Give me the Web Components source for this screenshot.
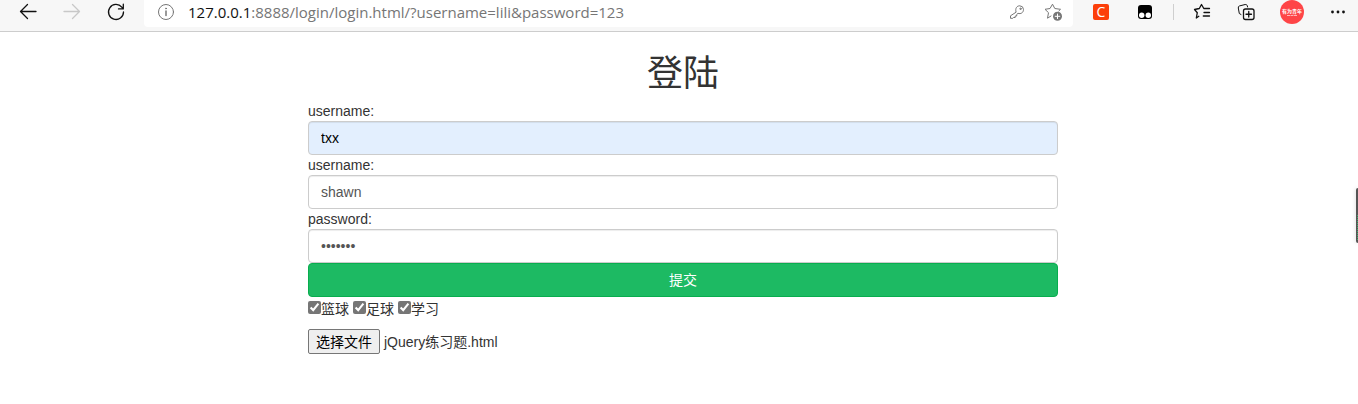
<!DOCTYPE html>
<html lang="zh-CN">
<head>
  <meta charset="UTF-8">
  <meta name="viewport" content="width=device-width, initial-scale=1">
  <title>登陆</title>
  <style>
    body {
      margin: 0;
      background: #fff;
      color: #333;
      font-family: "Liberation Sans", "Noto Sans CJK SC", sans-serif;
      font-size: 14px;
      line-height: 20px;
    }
  </style>
</head>
<body>
  <browser-toolbar></browser-toolbar>
  <login-page>
    <form-field label="username:" name="username" type="text" value="txx" filled></form-field>
    <form-field label="username:" name="nickname" type="text" value="shawn"></form-field>
    <form-field label="password:" name="password" type="password" value="1234567"></form-field>
    <submit-button>提交</submit-button>
    <hobby-list></hobby-list>
    <file-picker filename="jQuery练习题.html">选择文件</file-picker>
  </login-page>
  <side-handle></side-handle>

  <script>
    class BrowserToolbar extends HTMLElement {
      constructor () {
        super()
        this.shadow = this.attachShadow({ mode: 'open' })
      }

      connectedCallback () {
        this.render()
      }

      render () {
        this.shadow.innerHTML =
        /*html*/`
          <style>
            :host {
              display: flex;
              box-sizing: border-box;
              height: 32px;
              padding: 0 8px 0 16px;
              gap: 16px;
              background: #f7f7f7;
              border-bottom: 1px solid #cdcdcd;
            }

            button {
              flex: none;
              width: 24px;
              height: 24px;
              padding: 0;
              border: 0;
              background: none;
              color: #111;
            }

            button:disabled {
              color: #c8c8c8;
            }

            svg {
              display: block;
              width: 24px;
              height: 24px;
              fill: none;
              stroke: currentColor;
              stroke-linecap: round;
              stroke-linejoin: round;
            }

            .group {
              display: flex;
              gap: 20px;
            }

            .last {
              gap: 22px;
              padding-left: 6px;
            }

            .address {
              display: flex;
              flex: 1;
              min-width: 0;
              height: 27px;
              box-sizing: border-box;
              padding: 0 8px 0 10px;
              background: #fff;
              border-radius: 0 0 4px 4px;
            }

            .address button {
              color: #767676;
            }

            .url {
              flex: 1;
              min-width: 0;
              margin: 0 10px;
              overflow: hidden;
              white-space: nowrap;
              outline: 0;
              font: 15px/25px "Open Sans", "Noto Sans", sans-serif;
              color: #767676;
            }

            .host {
              color: #111;
            }

            .tools {
              display: flex;
              gap: 12px;
            }

            .badge {
              display: block;
              width: 16px;
              height: 16px;
              margin: 0 auto;
              border-radius: 2px;
              background: #fc3f0a;
              color: #fff;
              font: 14px/16px "Open Sans", sans-serif;
              text-align: center;
            }

            .divider {
              width: 1px;
              height: 16px;
              margin-top: 4px;
              background: #cfcfcf;
            }

            .avatar {
              border-radius: 50%;
              background: #fe4547;
              color: #fff;
              font: bold 5px/6px "Noto Sans CJK SC", sans-serif;
            }

            .avatar::after {
              content: "";
              display: block;
              width: 10px;
              margin: 1px auto 0;
              border-top: 1px dashed #ffb5b6;
            }
          </style>

          <div class="group">
            <button aria-label="后退">
              <svg viewBox="0 0 24 24"><path d="M20 11.5H4.5M11.500 4.500L4.500 11.500L11.500 18.500" stroke-width="1.3"/></svg>
            </button>
            <button aria-label="前进" disabled>
              <svg viewBox="0 0 24 24"><path d="M4 11.500H19.500M12.500 4.500L19.500 11.500L12.500 18.500" stroke-width="1.3"/></svg>
            </button>
            <button aria-label="刷新">
              <svg viewBox="0 0 24 24"><path d="M19.500 12A7.500 7.500 0 1 1 17.800 7.200L19 8.700M19.300 4.200V8.900H14.500" stroke-width="1.3"/></svg>
            </button>
          </div>

          <div class="address">
            <button aria-label="网站信息">
              <svg viewBox="0 0 24 24"><circle cx="12" cy="12" r="7.500"/><path d="M12 11V15.500" stroke-width="1.5"/><circle cx="12" cy="8.500" r=".5"/></svg>
            </button>
            <div class="url" role="textbox" aria-label="地址" contenteditable="true" spellcheck="false"><span class="host">127.0.0.1</span>:8888/login/login.html/?username=lili&amp;password=123</div>
            <div class="tools">
              <button aria-label="密码">
                <svg viewBox="0 0 24 24"><path d="M11 11.800C10 8.500 11.700 5.800 14.800 5.800A3.900 3.900 0 0 1 18.500 9.500C18.500 12.700 15.700 14.300 13 13.300L11.700 14.500V16H10.200V17.500H8.500L7.800 18.300H5.500V16.200Z"/><circle cx="15.500" cy="8.800" r=".7"/></svg>
              </button>
              <button aria-label="添加到收藏夹">
                <svg viewBox="0 0 24 24"><path d="M10 16L6.500 18.200L7.500 12.700L4 9.300L9 8.500L11.500 4.200L13.800 8.500L19.500 9.300L17.800 11"/><circle cx="16.500" cy="16.300" r="4.500" fill="currentColor" stroke="none"/><path d="M14.200 16.300H18.800M16.500 14V18.600" stroke="#fff"/></svg>
              </button>
            </div>
          </div>

          <div class="group">
            <button aria-label="扩展 C"><span class="badge">C</span></button>
            <button aria-label="Tampermonkey">
              <svg viewBox="0 0 24 24"><rect x="5" y="5" width="14" height="14" rx="3" fill="#000" stroke="none"/><circle cx="8.700" cy="15.300" r="2.700" fill="#fff" stroke="none"/><circle cx="15.300" cy="15.300" r="2.700" fill="#fff" stroke="none"/></svg>
            </button>
          </div>
          <div class="divider"></div>
          <div class="group">
            <button aria-label="收藏夹">
              <svg viewBox="0 0 24 24"><path d="M8.800 16.300L6.300 18L7.300 12.700L4.500 9.500L9.300 8.500L11.500 4.500L13.800 8.500H19.500M14 12.500H19.500M13.300 16H19.500" stroke-width="1.3"/></svg>
            </button>
            <button aria-label="集锦">
              <svg viewBox="0 0 24 24"><path d="M7 14.500L5.300 13.500L4.300 8Q4 6.300 5.600 5.900L11.200 4.500Q12.800 4.200 13.300 5.800L13.600 7"/><rect x="9.500" y="9" width="10.500" height="10.500" rx="2" stroke-width="1.3"/><path d="M14.750 11.500V17M12 14.250H17.500" stroke-width="1.300"/></svg>
            </button>
          </div>
          <div class="group last">
            <button class="avatar" aria-label="个人资料">有为青年</button>
            <button aria-label="设置及其他">
              <svg viewBox="0 0 24 24"><g fill="currentColor" stroke="none"><circle cx="6.500" cy="12" r="1.400"/><circle cx="12" cy="12" r="1.400"/><circle cx="17.500" cy="12" r="1.400"/></g></svg>
            </button>
          </div>
        `
      }
    }
    customElements.define('browser-toolbar', BrowserToolbar)

    class LoginPage extends HTMLElement {
      constructor () {
        super()
        this.shadow = this.attachShadow({ mode: 'open' })
      }

      connectedCallback () {
        this.render()
      }

      render () {
        this.shadow.innerHTML =
        /*html*/`
          <style>
            :host {
              display: block;
              padding: 20px 0 20px 8px;
            }

            h1 {
              margin: 0 0 5px;
              font-size: 36px;
              line-height: 44px;
              font-weight: 400;
              text-align: center;
            }

            form {
              max-width: 750px;
              margin: 0 auto;
            }
          </style>

          <form>
            <h1>登陆</h1>
            <slot></slot>
          </form>
        `
      }
    }
    customElements.define('login-page', LoginPage)

    class FormField extends HTMLElement {
      constructor () {
        super()
        this.shadow = this.attachShadow({ mode: 'open' })
      }

      connectedCallback () {
        this.render()
      }

      render () {
        this.shadow.innerHTML =
        /*html*/`
          <style>
            :host {
              display: block;
            }

            label {
              display: block;
            }

            input {
              display: block;
              box-sizing: border-box;
              width: 100%;
              height: 34px;
              padding: 6px 12px;
              border: 1px solid #ccc;
              border-radius: 4px;
              background: #fff;
              box-shadow: inset 0 1px 1px rgba(0, 0, 0, .075);
              color: #555;
              font: inherit;
            }

            :host([filled]) input {
              background: #e3effe;
              color: #000;
            }
          </style>

          <label for="field">${this.getAttribute('label')}</label>
          <input id="field" type="${this.getAttribute('type')}" name="${this.getAttribute('name')}" value="${this.getAttribute('value')}">
        `
      }
    }
    customElements.define('form-field', FormField)

    class SubmitButton extends HTMLElement {
      constructor () {
        super()
        this.shadow = this.attachShadow({ mode: 'open' })
      }

      connectedCallback () {
        this.render()
      }

      render () {
        this.shadow.innerHTML =
        /*html*/`
          <style>
            :host {
              display: block;
            }

            button {
              display: block;
              width: 100%;
              height: 34px;
              padding: 6px 12px;
              border: 1px solid #08ad4e;
              border-radius: 4px;
              background: #1dba63;
              color: #fff;
              font: inherit;
              cursor: pointer;
            }
          </style>

          <button type="button"><slot></slot></button>
        `
      }
    }
    customElements.define('submit-button', SubmitButton)

    class HobbyList extends HTMLElement {
      constructor () {
        super()
        this.shadow = this.attachShadow({ mode: 'open' })
        this.hobbies = ['篮球', '足球', '学习']
      }

      connectedCallback () {
        this.render()
      }

      render () {
        this.shadow.innerHTML =
        /*html*/`
          <style>
            :host {
              display: flex;
              gap: 4px;
              padding: 2px 0 10px;
            }

            label {
              display: flex;
            }

            input {
              width: 13px;
              height: 13px;
              margin: 2px 0 0;
              accent-color: #767676;
            }
          </style>

          ${this.hobbies.map(hobby => `<label><input type="checkbox" name="hobby" checked>${hobby}</label>`).join('')}
        `
      }
    }
    customElements.define('hobby-list', HobbyList)

    class FilePicker extends HTMLElement {
      constructor () {
        super()
        this.shadow = this.attachShadow({ mode: 'open' })
      }

      connectedCallback () {
        this.render()
      }

      render () {
        this.shadow.innerHTML =
        /*html*/`
          <style>
            :host {
              display: flex;
              align-items: center;
              gap: 4px;
            }

            button {
              height: 25px;
              padding: 0 7px;
              border: 1px solid #767676;
              border-radius: 2px;
              background: #efefef;
              color: #000;
              font: inherit;
            }
          </style>

          <button type="button"><slot></slot></button>
          <span>${this.getAttribute('filename')}</span>
          <input type="file" name="file" aria-label="选择文件" hidden>
        `

        const input = this.shadow.querySelector('input')
        this.shadow.querySelector('button').addEventListener('click', () => input.click())
        input.addEventListener('change', () => {
          if (input.files.length) {
            this.shadow.querySelector('span').textContent = input.files[0].name
          }
        })
      }
    }
    customElements.define('file-picker', FilePicker)

    class SideHandle extends HTMLElement {
      constructor () {
        super()
        this.shadow = this.attachShadow({ mode: 'open' })
      }

      connectedCallback () {
        this.render()
      }

      render () {
        this.shadow.innerHTML =
        /*html*/`
          <style>
            /* floats over the page at the right edge of the window */
            :host {
              position: absolute;
              top: 188px;
              right: 0;
              width: 2px;
              height: 55px;
              border-radius: 2px 0 0 2px;
              background: #555;
              box-shadow: 0 0 4px rgba(0, 0, 0, .2);
            }

            div {
              height: 26px;
              margin: 27px 0 0 1px;
              background: repeating-linear-gradient(#3fae70 0 1px, #555 1px 2px);
            }
          </style>

          <div></div>
        `
      }
    }
    customElements.define('side-handle', SideHandle)
  </script>
</body>
</html>
